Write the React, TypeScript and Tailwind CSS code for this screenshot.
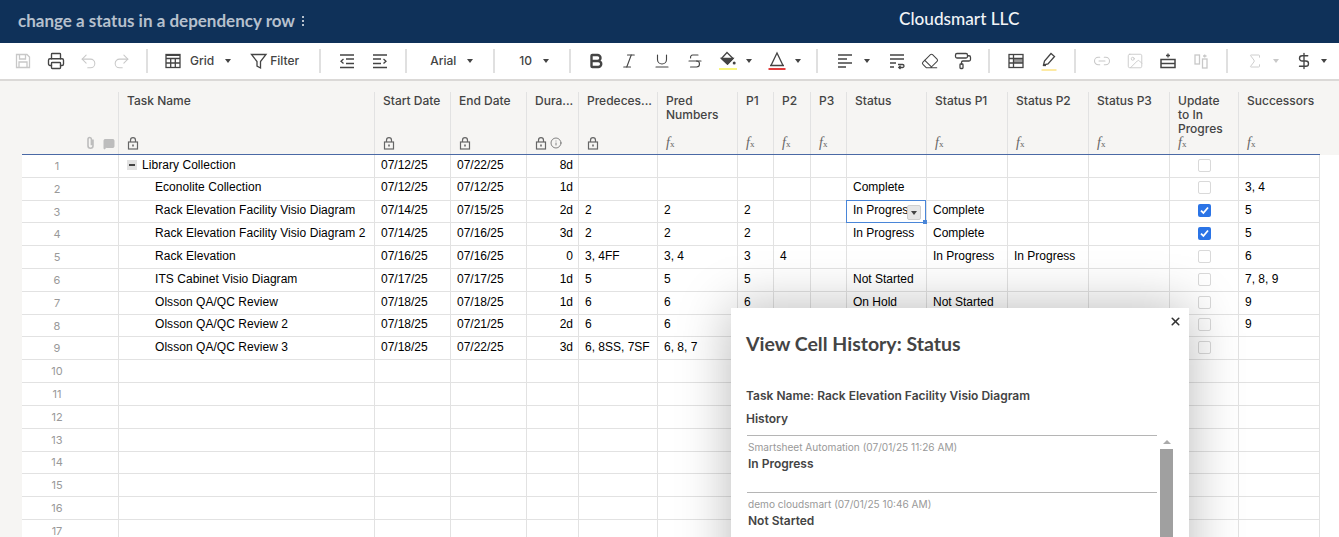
import { Bold, DollarSign, Eraser, Image, Info, Italic, Link2, MessageSquare, PaintRoller, Printer, Redo2, Sigma, Strikethrough, Underline, Undo2, X } from 'lucide-react';
import type { ReactNode } from 'react';

const GRID_COLS = 'grid grid-cols-[96px_256px_76px_76px_52px_79px_80px_36px_37px_36px_80px_81px_81px_81px_69px_82px]';

const DARK = '#444444';
const OFF = '#c8c8c8';

function Slot({ children, className = '' }: { children: ReactNode; className?: string }) {
  return <div className={'flex w-[33px] shrink-0 items-center justify-center ' + className}>{children}</div>;
}

function Sep({ className = '' }: { className?: string }) {
  return <div className={'h-[24px] w-[2px] shrink-0 bg-[#e0e0e0] ' + className} />;
}

function Caret({ className = '', off = false }: { className?: string; off?: boolean }) {
  return (
    <div
      className={
        'h-0 w-0 shrink-0 border-x-[3.5px] border-t-[4px] border-x-transparent ' +
        (off ? 'border-t-[#c8c8c8] ' : 'border-t-[#444444] ') +
        className
      }
    />
  );
}

function Ico({ children, color = DARK }: { children: ReactNode; color?: string }) {
  return (
    <svg width="18" height="18" viewBox="0 0 18 18" fill="none" stroke={color} strokeWidth="1.3">
      {children}
    </svg>
  );
}

function Toolbar() {
  return (
    <div className="flex h-[38px] shrink-0 items-center border-b-2 border-[#dbd9d7] bg-white pl-[6px] font-['Inter',sans-serif] text-[12px] font-medium text-[#444]">
      <Slot>
        <Ico color={OFF}>
          <path d="M2.5 2.5h10.5l2.5 2.5v10.500h-13z" />
          <path d="M5.500 2.500v4.500h6v-4.500M5 15.500v-5.500h8v5.500" />
        </Ico>
      </Slot>
      <Slot><Printer size={18} color={DARK} strokeWidth={1.8} /></Slot>
      <Slot><Undo2 size={19} color={OFF} strokeWidth={1.3} /></Slot>
      <Slot><Redo2 size={19} color={OFF} strokeWidth={1.3} /></Slot>
      <Sep className="ml-[8px]" />
      <div className="ml-[16px]">
        <Ico>
          <rect x="2" y="2.500" width="14" height="13" />
          <path d="M2 6.500h14M2 11h14M6.700 6.500v9M11.300 6.500v9" />
          <path d="M2 3h14" strokeWidth="2" />
        </Ico>
      </div>
      <span className="ml-[8px]">Grid</span>
      <Caret className="ml-[11px]" />
      <div className="ml-[19px]">
        <Ico>
          <path d="M1.500 2.500h14.500l-5.500 7v6.500l-3.500-2v-4.500z" />
        </Ico>
      </div>
      <span className="ml-[2px]">Filter</span>
      <Sep className="ml-[20px]" />
      <Slot className="ml-[9px]">
        <Ico>
          <path d="M2 3h14M2 15.500h14" strokeWidth="1.500" />
          <path d="M8 7h8M8 11.500h8M5.500 7 3 9.200l2.500 2.300" />
        </Ico>
      </Slot>
      <Slot>
        <Ico>
          <path d="M2 3h14M2 15.500h14" strokeWidth="1.500" />
          <path d="M2 7h8M2 11.500h8M12.500 7 15 9.200l-2.500 2.300" />
        </Ico>
      </Slot>
      <Sep className="ml-[9px]" />
      <span className="ml-[23px]">Arial</span>
      <Caret className="ml-[11px]" />
      <Sep className="ml-[20px]" />
      <span className="ml-[24px]">10</span>
      <Caret className="ml-[11px]" />
      <Sep className="ml-[20px]" />
      <Slot className="ml-[8px]"><Bold size={18} color={DARK} strokeWidth={3.2} /></Slot>
      <Slot><Italic size={18} color={DARK} strokeWidth={1.5} /></Slot>
      <Slot><Underline size={18} color={DARK} strokeWidth={1.5} /></Slot>
      <Slot><Strikethrough size={18} color={DARK} strokeWidth={1.5} /></Slot>
      <Slot>
        <svg width="18" height="20" viewBox="0 0 18 20" fill="none" stroke={DARK} strokeWidth="1.300">
          <path d="M8 1.500 14 7.500l-5.500 5.500-6-5.500z" />
          <path d="M2.500 7.500H14l-5.500 5.500z" fill={DARK} />
          <circle cx="15.200" cy="12" r="1.500" fill={DARK} stroke="none" />
          <path d="M0 18h18" stroke="#f8f67c" strokeWidth="2" />
        </svg>
      </Slot>
      <Caret className="ml-[2px]" />
      <Slot className="ml-[8px]">
        <svg width="18" height="20" viewBox="0 0 18 20" fill="none" stroke={DARK} strokeWidth="1.300">
          <path d="M3 14.500 9 2l6 12.500M2 14.500h14" />
          <path d="M0.500 18h17" stroke="#e23c3c" strokeWidth="2" />
        </svg>
      </Slot>
      <Caret className="ml-[2px]" />
      <Sep className="ml-[15px]" />
      <Slot className="ml-[10px]">
        <Ico>
          <path d="M2 3h14M2 7h9M2 11h14M2 15h8" />
        </Ico>
      </Slot>
      <Caret className="ml-[3px]" />
      <Slot className="ml-[10px]">
        <Ico>
          <path d="M2 3h14M2 7h14M2 11h6M2 15h4" />
          <path d="M10 12.500h4.500a1.500 1.500 0 0 1 0 3H11M12.500 13.800 10.800 15.500l1.700 1.500" />
        </Ico>
      </Slot>
      <Slot><Eraser size={18} color={DARK} strokeWidth={1.4} /></Slot>
      <Slot><PaintRoller size={18} color={DARK} strokeWidth={1.7} /></Slot>
      <Sep className="ml-[9px]" />
      <Slot className="ml-[9px]">
        <Ico>
          <rect x="6.500" y="6.500" width="9.500" height="4.500" fill="#9a9a9a" stroke="none" />
          <rect x="2" y="2.500" width="14" height="13" />
          <path d="M2 6.500h14M2 11h14M6.500 2.500v13" />
        </Ico>
      </Slot>
      <Slot>
        <svg width="18" height="21" viewBox="0 0 18 21" fill="none" stroke={DARK} strokeWidth="1.300">
          <path d="M3.500 14 4.500 10 11 2.500l3.500 3-6.500 7.500z" />
          <path d="M3 14.500h3" />
          <path d="M1.500 19h15" stroke="#fdeaa4" strokeWidth="2" />
        </svg>
      </Slot>
      <Sep className="ml-[9px]" />
      <Slot className="ml-[9px]"><Link2 size={18} color={OFF} strokeWidth={1.4} /></Slot>
      <Slot><Image size={18} color={OFF} strokeWidth={1.2} /></Slot>
      <Slot>
        <Ico>
          <rect x="2" y="7.500" width="14" height="8" strokeWidth="1.500" />
          <path d="M2 11.500h14" strokeWidth="1.500" />
          <path d="M7 3.500h4M9 1.500v4" />
        </Ico>
      </Slot>
      <Slot>
        <Ico color={OFF}>
          <rect x="3" y="3" width="4.500" height="9" />
          <rect x="10.500" y="7" width="4.500" height="9" />
          <path d="M11 4h3.500M12.700 2.500v3" />
        </Ico>
      </Slot>
      <Sep className="ml-[9px]" />
      <Slot className="ml-[10px]"><Sigma size={18} color={OFF} strokeWidth={1.2} /></Slot>
      <Caret className="ml-[2px]" off />
      <Slot className="ml-[8px]"><DollarSign size={18} color={DARK} strokeWidth={1.8} /></Slot>
      <Caret className="ml-[1px]" />
    </div>
  );
}

function Fx() {
  return (
    <span className="h-[14px] font-['Liberation_Serif',serif] text-[14px] leading-[14px] font-medium text-[#666] italic">
      f<span className="text-[9px] not-italic">x</span>
    </span>
  );
}

function Lk() {
  return (
    <svg width="12" height="13" viewBox="0 0 12 13" fill="none" stroke="#666666" strokeWidth="1.200">
      <rect x="1.500" y="5" width="9" height="7" />
      <path d="M3.500 5V3.200a2.500 2.500 0 0 1 5 0V5" />
      <path d="M6 7.500v2" strokeWidth="1.600" />
    </svg>
  );
}

function Clip() {
  return (
    <svg width="11" height="14" viewBox="0 0 11 14" fill="none" stroke="#bdbdbd" strokeWidth="1.600">
      <path d="M8 3.500v6.300a2.500 2.500 0 0 1-5 0V3.200a1.700 1.700 0 0 1 3.400 0v6" />
    </svg>
  );
}

type Head = { label: ReactNode; icon?: ReactNode };

const heads: Head[] = [
  { label: 'Task Name', icon: <Lk /> },
  { label: 'Start Date', icon: <Lk /> },
  { label: 'End Date', icon: <Lk /> },
  { label: 'Dura...', icon: <span className="flex items-center gap-[3px]"><Lk /><Info size={12} color="#666666" strokeWidth={1.6} /></span> },
  { label: 'Predeces...', icon: <Lk /> },
  { label: <>Pred<br />Numbers</>, icon: <Fx /> },
  { label: 'P1', icon: <Fx /> },
  { label: 'P2', icon: <Fx /> },
  { label: 'P3', icon: <Fx /> },
  { label: 'Status' },
  { label: 'Status P1', icon: <Fx /> },
  { label: 'Status P2', icon: <Fx /> },
  { label: 'Status P3', icon: <Fx /> },
  { label: <>Update<br />to In<br />Progres</>, icon: <Fx /> },
  { label: 'Successors', icon: <Fx /> },
];

function HeaderRow() {
  return (
    <div className="h-[74px] shrink-0 bg-[#f6f5f3] pt-[11px] pl-[22px] font-['Inter',sans-serif] text-[12px] leading-[14px] font-medium text-[#444]">
      <div className={GRID_COLS + ' h-[63px] w-[1298px] border-b border-[#4a69a5]'}>
        <div className="flex items-end justify-end gap-[7px] pr-[3px] pb-[4px]">
          <Clip />
          <MessageSquare size={12} color="#bdbdbd" fill="#bdbdbd" />
        </div>
        {heads.map((h, i) => (
          <div key={i} className="flex flex-col justify-between border-l border-[#e2e2e2] pt-[2px] pb-[4px] pl-[8px]">
            <div className="whitespace-nowrap">{h.label}</div>
            <div className="flex h-[14px] items-center">{h.icon}</div>
          </div>
        ))}
      </div>
    </div>
  );
}

type RowData = {
  task?: string;
  cells?: string[];
  top?: boolean;
  checked?: boolean;
  box?: boolean;
  active?: boolean;
  lift?: boolean;
};

// start, end, duration, predecessors, pred numbers, p1, p2, p3, status, status p1, p2, p3, successors
const rows: RowData[] = [
  { task: 'Library Collection', top: true, box: true, cells: ['07/12/25', '07/22/25', '8d', '', '', '', '', '', '', '', '', '', ''] },
  { task: 'Econolite Collection', box: true, lift: true, cells: ['07/12/25', '07/12/25', '1d', '', '', '', '', '', 'Complete', '', '', '', '3, 4'] },
  { task: 'Rack Elevation Facility Visio Diagram', box: true, lift: true, checked: true, active: true, cells: ['07/14/25', '07/15/25', '2d', '2', '2', '2', '', '', 'In Progress', 'Complete', '', '', '5'] },
  { task: 'Rack Elevation Facility Visio Diagram 2', box: true, checked: true, cells: ['07/14/25', '07/16/25', '3d', '2', '2', '2', '', '', 'In Progress', 'Complete', '', '', '5'] },
  { task: 'Rack Elevation', box: true, cells: ['07/16/25', '07/16/25', '0', '3, 4FF', '3, 4', '3', '4', '', '', 'In Progress', 'In Progress', '', '6'] },
  { task: 'ITS Cabinet Visio Diagram', box: true, cells: ['07/17/25', '07/17/25', '1d', '5', '5', '5', '', '', 'Not Started', '', '', '', '7, 8, 9'] },
  { task: 'Olsson QA/QC Review', box: true, cells: ['07/18/25', '07/18/25', '1d', '6', '6', '6', '', '', 'On Hold', 'Not Started', '', '', '9'] },
  { task: 'Olsson QA/QC Review 2', box: true, lift: true, cells: ['07/18/25', '07/21/25', '2d', '6', '6', '', '', '', '', '', '', '', '9'] },
  { task: 'Olsson QA/QC Review 3', box: true, cells: ['07/18/25', '07/22/25', '3d', '6, 8SS, 7SF', '6, 8, 7', '', '', '', '', '', '', '', ''] },
];

function Checkbox({ checked }: { checked?: boolean }) {
  if (checked) {
    return (
      <div className="flex h-[13px] w-[13px] items-center justify-center rounded-[2px] bg-[#2b74e6]">
        <svg width="9" height="9" viewBox="0 0 9 9" fill="none" stroke="#ffffff" strokeWidth="1.800">
          <path d="M1 4.700 3.400 7 8 1.500" />
        </svg>
      </div>
    );
  }
  return <div className="h-[13px] w-[13px] rounded-[2px] border border-[#d9d9d9] bg-white" />;
}

function Row({ n, data, short }: { n: number; data: RowData; short: boolean }) {
  const cells = data.cells ?? ['', '', '', '', '', '', '', '', '', '', '', '', ''];
  const pad = data.lift ? 'pb-[4px] ' : 'pb-[2px] ';
  return (
    <div className={GRID_COLS + ' shrink-0 border-b border-[#e2e2e2] bg-white ' + (short ? 'h-[22px]' : 'h-[23px]')}>
      <div className="flex items-center justify-center pr-[26px] font-['Inter',sans-serif] text-[11px] text-[#999]">{n}</div>
      <div className={pad + 'flex items-center border-l border-[#e2e2e2] tracking-[0.05px] whitespace-nowrap'}>
        {data.top ? (
          <>
            <div className="ml-[8px] flex h-[10px] w-[10px] items-center justify-center bg-[#e2e2e2]">
              <div className="h-[2px] w-[6px] bg-[#444]" />
            </div>
            <span className="ml-[5px]">{data.task}</span>
          </>
        ) : (
          <span className="ml-[36px]">{data.task}</span>
        )}
      </div>
      {cells.slice(0, 12).map((c, i) => {
        if (data.active && i === 8) {
          return (
            <div key={i} className="relative z-10 -mt-px flex items-center border border-[#4a86d8] pb-[3px] pl-[6px] whitespace-nowrap">
              {c}
              <div className="absolute top-[4px] right-[4px] flex h-[15px] w-[14px] items-center justify-center rounded-[2px] border border-[#cfcfcf] bg-[#e6e6e6]">
                <Caret />
              </div>
              <div className="absolute -right-[2px] -bottom-[2px] h-[4px] w-[4px] bg-[#4a86d8]" />
            </div>
          );
        }
        return (
          <div key={i} className={pad + 'flex items-center border-l border-[#e2e2e2] pl-[6px] whitespace-nowrap ' + (i === 2 ? 'justify-end pr-[5px]' : '')}>
            {c}
          </div>
        );
      })}
      <div className={pad + 'flex items-center justify-center border-l border-[#e2e2e2]'}>{data.box ? <Checkbox checked={data.checked} /> : null}</div>
      <div className={pad + 'flex items-center border-r border-l border-[#e2e2e2] pl-[6px] whitespace-nowrap'}>{cells[12]}</div>
    </div>
  );
}

function HistoryDialog() {
  return (
    <div className="absolute top-[308px] left-[731px] z-20 h-[300px] w-[458px] bg-white pt-[26px] pl-[15px] font-['Inter',sans-serif] text-[#444] shadow-[0_0_50px_rgba(0,0,0,0.28)]">
      <X size={13} color="#333333" strokeWidth={3} className="absolute top-[7px] right-[7px]" />
      <div className="font-['Lato',sans-serif] text-[19.500px] leading-[20px] font-bold">View Cell History: Status</div>
      <div className="mt-[34px] text-[12px] leading-[16px] font-semibold">Task Name: Rack Elevation Facility Visio Diagram</div>
      <div className="mt-[7px] text-[12px] leading-[16px] font-semibold">History</div>
      <div className="mt-[8px] ml-[1px] flex w-[428px]">
        <div className="w-[410px] shrink-0">
          <div className="h-[57px] border-t border-[#b5b5b5] pt-[5px] pl-[1px]">
            <div className="text-[10.100px] leading-[12px] font-normal text-[#999]">Smartsheet Automation (07/01/25 11:26 AM)</div>
            <div className="mt-[3px] text-[12px] leading-[16px] font-semibold">In Progress</div>
          </div>
          <div className="border-t border-[#b5b5b5] pt-[5px] pl-[1px]">
            <div className="text-[10.100px] leading-[12px] font-normal text-[#999]">demo cloudsmart (07/01/25 10:46 AM)</div>
            <div className="mt-[3px] text-[12px] leading-[16px] font-semibold">Not Started</div>
          </div>
        </div>
        <div className="ml-[3px] flex w-[13px] flex-col items-center pt-[5px]">
          <div className="h-0 w-0 border-x-[4px] border-b-[4px] border-x-transparent border-b-[#aaa]" />
          <div className="mt-[5px] h-[120px] w-[13px] bg-[#a0a0a0]" />
        </div>
      </div>
    </div>
  );
}

export default function App() {
  const shortRows = [3, 8, 14];
  return (
    <div className="relative flex h-[537px] w-[1339px] flex-col overflow-hidden bg-white font-['Liberation_Sans',sans-serif] text-[12px] text-black">
      <div className="flex h-[43px] shrink-0 items-center bg-[#0f3159] pl-[18px]">
        <div className="-mt-[2px] flex w-[881px] shrink-0 items-center font-['Lato',sans-serif] text-[17px] font-bold text-[#b6c0cd]">
          change a status in a dependency row
          <span className="ml-[7px] flex flex-col gap-[2px]">
            <span className="h-[2px] w-[2px] bg-[#b6c0cd]" />
            <span className="h-[2px] w-[2px] bg-[#b6c0cd]" />
            <span className="h-[2px] w-[2px] bg-[#b6c0cd]" />
          </span>
        </div>
        <div className="-mt-[5px] font-['Lato',sans-serif] text-[17.200px] font-medium text-[#f2f4f7]">Cloudsmart LLC</div>
      </div>
      <Toolbar />
      <HeaderRow />
      <div className="min-h-0 flex-1 overflow-hidden bg-[#f6f5f3]">
        <div className="flex h-full">
          <div className="w-[22px] shrink-0" />
          <div className="flex w-[1298px] shrink-0 flex-col overflow-hidden">
            {rows.map((r, i) => (
              <Row key={i} n={i + 1} data={r} short={shortRows.includes(i + 1)} />
            ))}
            {[10, 11, 12, 13, 14, 15, 16, 17].map((n) => (
              <Row key={n} n={n} data={{}} short={shortRows.includes(n)} />
            ))}
          </div>
          <div className="flex-1 bg-white" />
        </div>
      </div>
      <HistoryDialog />
    </div>
  );
}
